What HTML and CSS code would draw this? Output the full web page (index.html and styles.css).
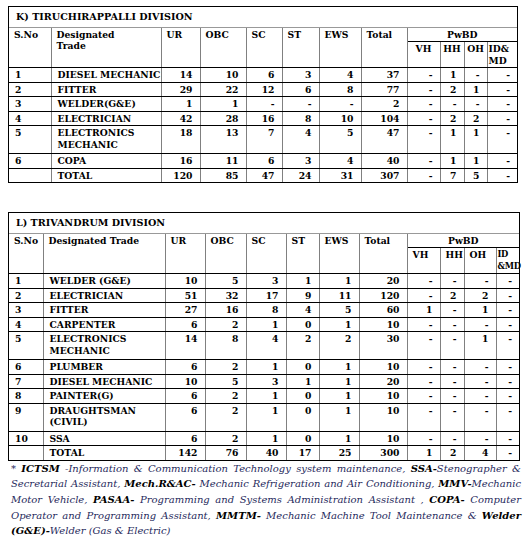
FILE: index.html
```html
<!DOCTYPE html>
<html>
<head>
<meta charset="utf-8">
<link rel="stylesheet" href="styles.css">
</head>
<body>
<div class="page">
  <div class="box t1">
    <table>
      <colgroup>
        <col class="c1"><col class="c2"><col class="c3"><col class="c4"><col class="c5"><col class="c6">
        <col class="c7"><col class="c8"><col class="c9"><col class="c10"><col class="c11"><col class="c12">
      </colgroup>
      <tr class="title"><td colspan="12">K) TIRUCHIRAPPALLI DIVISION</td></tr>
      <tr class="head">
        <td rowspan="2">S.No</td><td rowspan="2">Designated<br>Trade</td><td rowspan="2">UR</td><td rowspan="2">OBC</td>
        <td rowspan="2">SC</td><td rowspan="2">ST</td><td rowspan="2">EWS</td><td rowspan="2">Total</td>
        <td colspan="4" class="pw">PwBD</td>
      </tr>
      <tr class="head sub"><td class="ctr">VH</td><td class="ctr">HH</td><td class="ctr">OH</td><td class="id">ID&amp;<br>MD</td></tr>
      <tr><td>1</td><td>DIESEL MECHANIC</td><td class="n">14</td><td class="n">10</td><td class="n">6</td><td class="n">3</td><td class="n">4</td><td class="n">37</td><td class="n">-</td><td class="n">1</td><td class="n">-</td><td class="n">-</td></tr>
      <tr><td>2</td><td>FITTER</td><td class="n">29</td><td class="n">22</td><td class="n">12</td><td class="n">6</td><td class="n">8</td><td class="n">77</td><td class="n">-</td><td class="n">2</td><td class="n">1</td><td class="n">-</td></tr>
      <tr><td>3</td><td>WELDER(G&amp;E)</td><td class="n">1</td><td class="n">1</td><td class="n">-</td><td class="n">-</td><td class="n">-</td><td class="n">2</td><td class="n">-</td><td class="n">-</td><td class="n">-</td><td class="n">-</td></tr>
      <tr><td>4</td><td>ELECTRICIAN</td><td class="n">42</td><td class="n">28</td><td class="n">16</td><td class="n">8</td><td class="n">10</td><td class="n">104</td><td class="n">-</td><td class="n">2</td><td class="n">2</td><td class="n">-</td></tr>
      <tr class="dbl"><td>5</td><td>ELECTRONICS<br>MECHANIC</td><td class="n">18</td><td class="n">13</td><td class="n">7</td><td class="n">4</td><td class="n">5</td><td class="n">47</td><td class="n">-</td><td class="n">1</td><td class="n">1</td><td class="n">-</td></tr>
      <tr><td>6</td><td>COPA</td><td class="n">16</td><td class="n">11</td><td class="n">6</td><td class="n">3</td><td class="n">4</td><td class="n">40</td><td class="n">-</td><td class="n">1</td><td class="n">1</td><td class="n">-</td></tr>
      <tr><td></td><td>TOTAL</td><td class="n">120</td><td class="n">85</td><td class="n">47</td><td class="n">24</td><td class="n">31</td><td class="n">307</td><td class="n">-</td><td class="n">7</td><td class="n">5</td><td class="n">-</td></tr>
    </table>
  </div>

  <div class="box t2">
    <table>
      <colgroup>
        <col class="c1"><col class="c2"><col class="c3"><col class="c4"><col class="c5"><col class="c6">
        <col class="c7"><col class="c8"><col class="c9"><col class="c10"><col class="c11"><col class="c12">
      </colgroup>
      <tr class="title"><td colspan="12">L) TRIVANDRUM DIVISION</td></tr>
      <tr class="head">
        <td rowspan="2">S.No</td><td rowspan="2">Designated Trade</td><td rowspan="2">UR</td><td rowspan="2">OBC</td>
        <td rowspan="2">SC</td><td rowspan="2">ST</td><td rowspan="2">EWS</td><td rowspan="2">Total</td>
        <td colspan="4" class="pw">PwBD</td>
      </tr>
      <tr class="head sub"><td>VH</td><td>HH</td><td>OH</td><td class="id tight">ID<br>&amp;MD</td></tr>
      <tr><td>1</td><td>WELDER (G&amp;E)</td><td class="n">10</td><td class="n">5</td><td class="n">3</td><td class="n">1</td><td class="n">1</td><td class="n">20</td><td class="n">-</td><td class="n">-</td><td class="n">-</td><td class="n">-</td></tr>
      <tr><td>2</td><td>ELECTRICIAN</td><td class="n">51</td><td class="n">32</td><td class="n">17</td><td class="n">9</td><td class="n">11</td><td class="n">120</td><td class="n">-</td><td class="n">2</td><td class="n">2</td><td class="n">-</td></tr>
      <tr><td>3</td><td>FITTER</td><td class="n">27</td><td class="n">16</td><td class="n">8</td><td class="n">4</td><td class="n">5</td><td class="n">60</td><td class="n">1</td><td class="n">-</td><td class="n">1</td><td class="n">-</td></tr>
      <tr><td>4</td><td>CARPENTER</td><td class="n">6</td><td class="n">2</td><td class="n">1</td><td class="n">0</td><td class="n">1</td><td class="n">10</td><td class="n">-</td><td class="n">-</td><td class="n">-</td><td class="n">-</td></tr>
      <tr class="dbl"><td>5</td><td>ELECTRONICS<br>MECHANIC</td><td class="n">14</td><td class="n">8</td><td class="n">4</td><td class="n">2</td><td class="n">2</td><td class="n">30</td><td class="n">-</td><td class="n">-</td><td class="n">1</td><td class="n">-</td></tr>
      <tr><td>6</td><td>PLUMBER</td><td class="n">6</td><td class="n">2</td><td class="n">1</td><td class="n">0</td><td class="n">1</td><td class="n">10</td><td class="n">-</td><td class="n">-</td><td class="n">-</td><td class="n">-</td></tr>
      <tr><td>7</td><td>DIESEL MECHANIC</td><td class="n">10</td><td class="n">5</td><td class="n">3</td><td class="n">1</td><td class="n">1</td><td class="n">20</td><td class="n">-</td><td class="n">-</td><td class="n">-</td><td class="n">-</td></tr>
      <tr><td>8</td><td>PAINTER(G)</td><td class="n">6</td><td class="n">2</td><td class="n">1</td><td class="n">0</td><td class="n">1</td><td class="n">10</td><td class="n">-</td><td class="n">-</td><td class="n">-</td><td class="n">-</td></tr>
      <tr class="dbl"><td>9</td><td>DRAUGHTSMAN<br>(CIVIL)</td><td class="n">6</td><td class="n">2</td><td class="n">1</td><td class="n">0</td><td class="n">1</td><td class="n">10</td><td class="n">-</td><td class="n">-</td><td class="n">-</td><td class="n">-</td></tr>
      <tr><td>10</td><td>SSA</td><td class="n">6</td><td class="n">2</td><td class="n">1</td><td class="n">0</td><td class="n">1</td><td class="n">10</td><td class="n">-</td><td class="n">-</td><td class="n">-</td><td class="n">-</td></tr>
      <tr><td></td><td>TOTAL</td><td class="n">142</td><td class="n">76</td><td class="n">40</td><td class="n">17</td><td class="n">25</td><td class="n">300</td><td class="n">1</td><td class="n">2</td><td class="n">4</td><td class="n">-</td></tr>
    </table>
  </div>

  <div class="note">
    <span class="ln">* <b>ICTSM</b> -Information &amp; Communication Technology system maintenance, <b>SSA-</b>Stenographer &amp;</span>
    <span class="ln">Secretarial Assistant, <b>Mech.R&amp;AC-</b> Mechanic Refrigeration and Air Conditioning, <b>MMV-</b>Mechanic</span>
    <span class="ln">Motor Vehicle, <b>PASAA-</b> Programming and Systems Administration Assistant , <b>COPA-</b> Computer</span>
    <span class="ln">Operator and Programming Assistant, <b>MMTM-</b> Mechanic Machine Tool Maintenance &amp; <b>Welder</b></span>
    <span class="ln last"><b>(G&amp;E)-</b>Welder (Gas &amp; Electric)</span>
  </div>
</div>
</body>
</html>
```

FILE: styles.css
```css
html, body {
  margin: 0;
  padding: 0;
  background: #fff;
}
.page {
  padding: 6px 8px 0 8px;
  font-family: "DejaVu Serif", "Liberation Serif", serif;
  color: #000;
}
.box {
  border: 1px solid #000;
}
.t1 { width: 508px; }
.t2 { width: 510px; margin-top: 29px; }
table {
  border-collapse: collapse;
  border-style: hidden;
  table-layout: fixed;
  width: 100%;
  font-weight: bold;
  font-size: 9.2px;
}
td {
  border-left: 1px solid #808080;
  border-right: 1px solid #808080;
  border-top: 1px solid #000;
  border-bottom: 1px solid #000;
  padding: 1px 6px 1px 6px;
  line-height: 11.5px;
  vertical-align: top;
  text-align: left;
  white-space: nowrap;
  overflow: hidden;
}
.title td {
  font-size: 9.6px;
  padding: 4px 7px 4px 7px;
  border-bottom-color: #999;
}
.head td { padding-left: 5px; padding-right: 2px; }
.head td.pw { text-align: center; padding: 1px 0; }
.head td.ctr { text-align: center; padding-left: 0; padding-right: 0; }
.head td.id { padding-left: 1px; padding-right: 0; }
.head td.tight { font-size: 8.4px; letter-spacing: -0.3px; overflow: visible; }
td.n { text-align: right; padding-right: 7px; padding-left: 0; }
.dbl td { padding-bottom: 3px; }

.t1 .c1 { width: 42px; }
.t1 .c2 { width: 110px; }
.t1 .c3 { width: 39px; }
.t1 .c4 { width: 46px; }
.t1 .c5 { width: 36px; }
.t1 .c6 { width: 37px; }
.t1 .c7 { width: 42px; }
.t1 .c8 { width: 46px; }
.t1 .c9 { width: 33px; }
.t1 .c10 { width: 24px; }
.t1 .c11 { width: 23px; }
.t1 .c12 { width: 30px; }

.t2 .c1 { width: 34px; }
.t2 .c2 { width: 122px; }
.t2 .c3 { width: 40px; }
.t2 .c4 { width: 41px; }
.t2 .c5 { width: 40px; }
.t2 .c6 { width: 33px; }
.t2 .c7 { width: 40px; }
.t2 .c8 { width: 48px; }
.t2 .c9 { width: 33px; }
.t2 .c10 { width: 24px; }
.t2 .c11 { width: 32px; }
.t2 .c12 { width: 23px; }

.note {
  width: 510px;
  margin-left: 3px;
  font-style: italic;
  font-size: 10px;
  line-height: 15.7px;
  color: #1f2a5c;
}
.note b { color: #000; }
.ln {
  display: block;
  text-align: justify;
  text-align-last: justify;
}
.ln.last { text-align-last: left; }
```
